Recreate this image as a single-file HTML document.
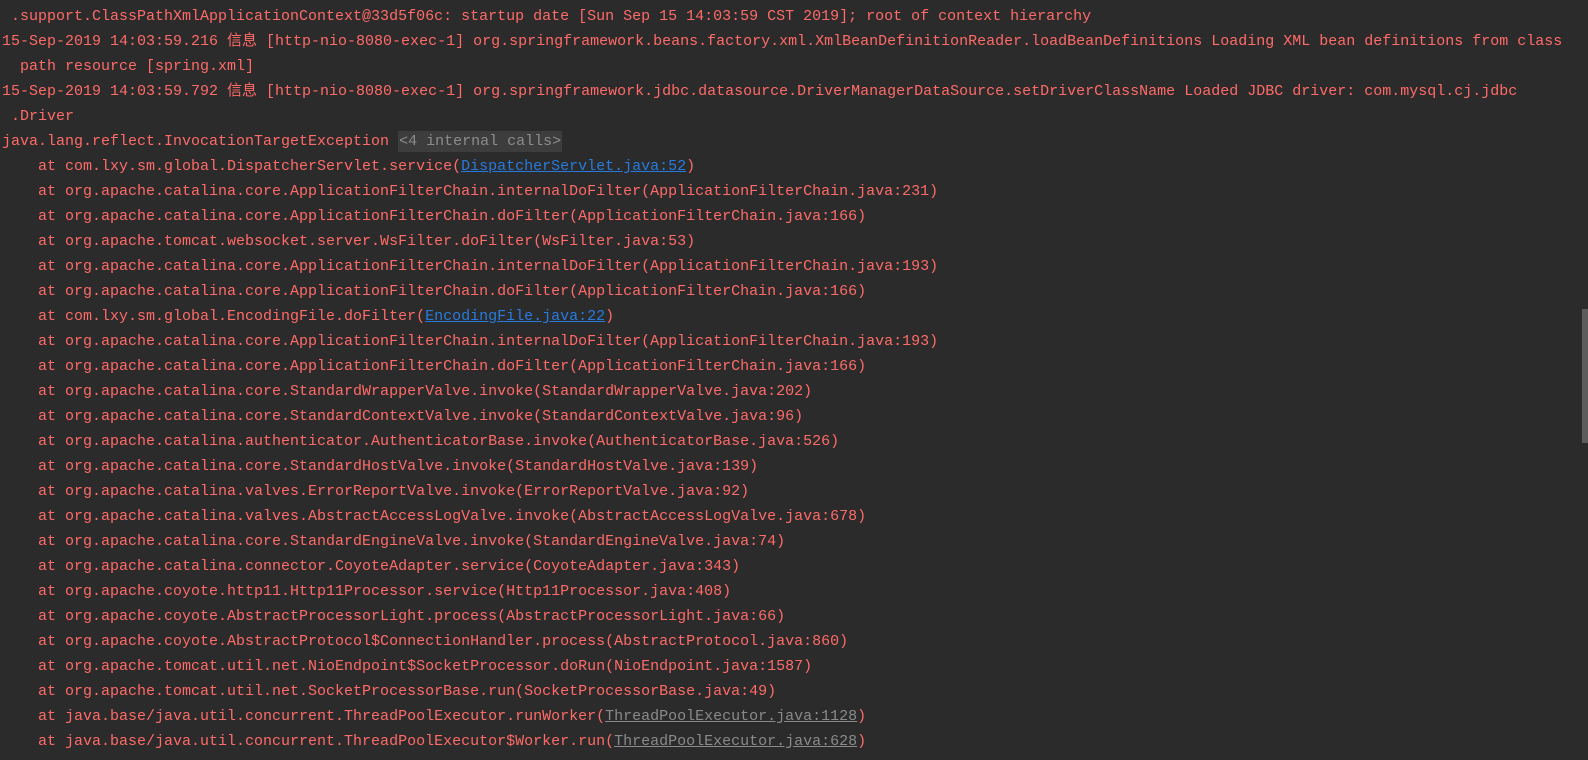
<!DOCTYPE html>
<html><head><meta charset="utf-8"><style>
html,body{margin:0;padding:0;background:#2b2b2b;width:1588px;height:760px;overflow:hidden}
.l{position:absolute;left:2px;white-space:pre;font-family:"Liberation Mono","Noto Sans CJK SC",monospace;font-size:15px;color:#ff6b68;line-height:20px}
a{color:#287bde;text-decoration:underline}
a.g{color:#8a8a8a}
.ic{background:#3d3d3d;color:#8c8c8c;padding:2px 1px}
.sb{position:absolute;left:1582px;top:309px;width:6px;height:134px;background:#5c5c5c}
</style></head><body>
<div class="l" style="top:7px"> .support.ClassPathXmlApplicationContext@33d5f06c: startup date [Sun Sep 15 14:03:59 CST 2019]; root of context hierarchy</div>
<div class="l" style="top:32px">15-Sep-2019 14:03:59.216 信息 [http-nio-8080-exec-1] org.springframework.beans.factory.xml.XmlBeanDefinitionReader.loadBeanDefinitions Loading XML bean definitions from class</div>
<div class="l" style="top:57px">  path resource [spring.xml]</div>
<div class="l" style="top:82px">15-Sep-2019 14:03:59.792 信息 [http-nio-8080-exec-1] org.springframework.jdbc.datasource.DriverManagerDataSource.setDriverClassName Loaded JDBC driver: com.mysql.cj.jdbc</div>
<div class="l" style="top:107px"> .Driver</div>
<div class="l" style="top:132px">java.lang.reflect.InvocationTargetException <span class="ic">&lt;4 internal calls&gt;</span></div>
<div class="l" style="top:157px">    at com.lxy.sm.global.DispatcherServlet.service(<a>DispatcherServlet.java:52</a>)</div>
<div class="l" style="top:182px">    at org.apache.catalina.core.ApplicationFilterChain.internalDoFilter(ApplicationFilterChain.java:231)</div>
<div class="l" style="top:207px">    at org.apache.catalina.core.ApplicationFilterChain.doFilter(ApplicationFilterChain.java:166)</div>
<div class="l" style="top:232px">    at org.apache.tomcat.websocket.server.WsFilter.doFilter(WsFilter.java:53)</div>
<div class="l" style="top:257px">    at org.apache.catalina.core.ApplicationFilterChain.internalDoFilter(ApplicationFilterChain.java:193)</div>
<div class="l" style="top:282px">    at org.apache.catalina.core.ApplicationFilterChain.doFilter(ApplicationFilterChain.java:166)</div>
<div class="l" style="top:307px">    at com.lxy.sm.global.EncodingFile.doFilter(<a>EncodingFile.java:22</a>)</div>
<div class="l" style="top:332px">    at org.apache.catalina.core.ApplicationFilterChain.internalDoFilter(ApplicationFilterChain.java:193)</div>
<div class="l" style="top:357px">    at org.apache.catalina.core.ApplicationFilterChain.doFilter(ApplicationFilterChain.java:166)</div>
<div class="l" style="top:382px">    at org.apache.catalina.core.StandardWrapperValve.invoke(StandardWrapperValve.java:202)</div>
<div class="l" style="top:407px">    at org.apache.catalina.core.StandardContextValve.invoke(StandardContextValve.java:96)</div>
<div class="l" style="top:432px">    at org.apache.catalina.authenticator.AuthenticatorBase.invoke(AuthenticatorBase.java:526)</div>
<div class="l" style="top:457px">    at org.apache.catalina.core.StandardHostValve.invoke(StandardHostValve.java:139)</div>
<div class="l" style="top:482px">    at org.apache.catalina.valves.ErrorReportValve.invoke(ErrorReportValve.java:92)</div>
<div class="l" style="top:507px">    at org.apache.catalina.valves.AbstractAccessLogValve.invoke(AbstractAccessLogValve.java:678)</div>
<div class="l" style="top:532px">    at org.apache.catalina.core.StandardEngineValve.invoke(StandardEngineValve.java:74)</div>
<div class="l" style="top:557px">    at org.apache.catalina.connector.CoyoteAdapter.service(CoyoteAdapter.java:343)</div>
<div class="l" style="top:582px">    at org.apache.coyote.http11.Http11Processor.service(Http11Processor.java:408)</div>
<div class="l" style="top:607px">    at org.apache.coyote.AbstractProcessorLight.process(AbstractProcessorLight.java:66)</div>
<div class="l" style="top:632px">    at org.apache.coyote.AbstractProtocol$ConnectionHandler.process(AbstractProtocol.java:860)</div>
<div class="l" style="top:657px">    at org.apache.tomcat.util.net.NioEndpoint$SocketProcessor.doRun(NioEndpoint.java:1587)</div>
<div class="l" style="top:682px">    at org.apache.tomcat.util.net.SocketProcessorBase.run(SocketProcessorBase.java:49)</div>
<div class="l" style="top:707px">    at java.base/java.util.concurrent.ThreadPoolExecutor.runWorker(<a class="g">ThreadPoolExecutor.java:1128</a>)</div>
<div class="l" style="top:732px">    at java.base/java.util.concurrent.ThreadPoolExecutor$Worker.run(<a class="g">ThreadPoolExecutor.java:628</a>)</div>
<div class="sb"></div>
</body></html>
